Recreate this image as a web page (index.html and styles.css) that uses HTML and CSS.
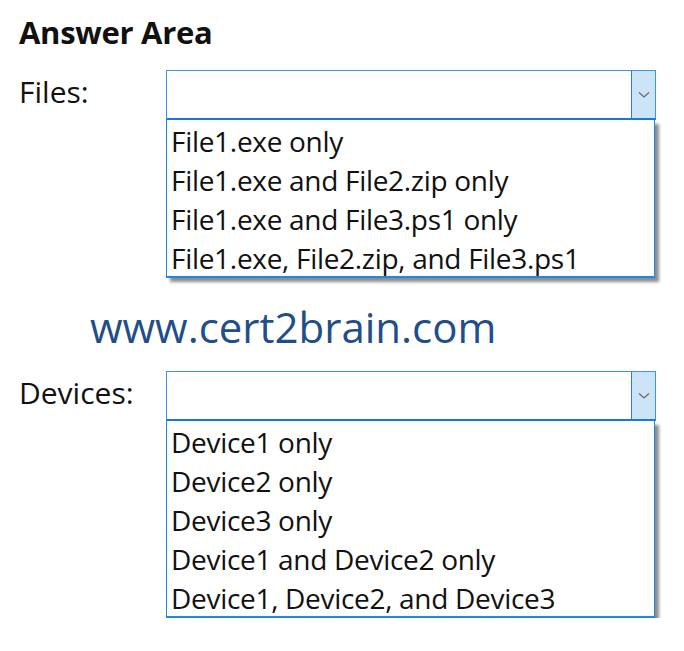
FILE: index.html
```html
<!DOCTYPE html>
<html>
<head>
<meta charset="utf-8">
<link rel="stylesheet" href="styles.css">
</head>
<body>
<div class="page">
  <h1 class="title">Answer Area</h1>
  <div class="field">
    <div class="label">Files:</div>
    <div class="combo">
      <div class="select">
        <div class="value"></div>
        <div class="btn"><svg width="12" height="8" viewBox="0 0 12 8"><path d="M1 1.5 L6 6 L11 1.5" fill="none" stroke="#6b6b6b" stroke-width="1.3"/></svg></div>
      </div>
      <ul class="list">
        <li>File1.exe only</li>
        <li>File1.exe and File2.zip only</li>
        <li>File1.exe and File3.ps1 only</li>
        <li>File1.exe, File2.zip, and File3.ps1</li>
      </ul>
    </div>
  </div>
  <div class="watermark">www.cert2brain.com</div>
  <div class="field">
    <div class="label">Devices:</div>
    <div class="combo">
      <div class="select">
        <div class="value"></div>
        <div class="btn"><svg width="12" height="8" viewBox="0 0 12 8"><path d="M1 1.5 L6 6 L11 1.5" fill="none" stroke="#6b6b6b" stroke-width="1.3"/></svg></div>
      </div>
      <ul class="list">
        <li>Device1 only</li>
        <li>Device2 only</li>
        <li>Device3 only</li>
        <li>Device1 and Device2 only</li>
        <li>Device1, Device2, and Device3</li>
      </ul>
    </div>
  </div>
</div>
</body>
</html>
```
FILE: styles.css
```css
html, body {
  margin: 0;
  padding: 0;
  background: #ffffff;
}
.page {
  font-family: "Open Sans", "Noto Sans", sans-serif;
  color: #111111;
  padding: 14px 0 0 19px;
}
.title {
  margin: 0;
  font-size: 31px;
  font-weight: 700;
  line-height: 36px;
  height: 36px;
  letter-spacing: -0.3px;
}
.field {
  display: flex;
  align-items: flex-start;
  margin-top: 20px;
}
.label {
  width: 147px;
  font-size: 30px;
  line-height: 44px;
  letter-spacing: 0;
}
.combo {
  width: 490px;
  display: flex;
  flex-direction: column;
}
.select {
  height: 50px;
  box-sizing: border-box;
  border: 1px solid #3d93e6;
  border-bottom: 2px solid #1c78d6;
  display: flex;
}
.value {
  flex: 1;
}
.btn {
  width: 23px;
  background: #cce4f7;
  border-left: 1px solid #2a7fd4;
  display: flex;
  align-items: center;
  justify-content: center;
}
.list {
  list-style: none;
  margin: 0;
  padding: 0 0 0 4px;
  width: 489px;
  box-sizing: border-box;
  border: 1px solid #1e88e5;
  border-top: none;
  border-bottom: 2px solid #1e88e5;
  box-shadow: 4px 4px 3px rgba(0, 0, 0, 0.45);
}
.list li {
  font-size: 28px;
  line-height: 43px;
  height: 39px;
  letter-spacing: -0.3px;
  white-space: nowrap;
}
.watermark {
  margin: 24px 0 0 71px;
  font-size: 42px;
  line-height: 49px;
  height: 49px;
  color: #1f4e8a;
}
```
